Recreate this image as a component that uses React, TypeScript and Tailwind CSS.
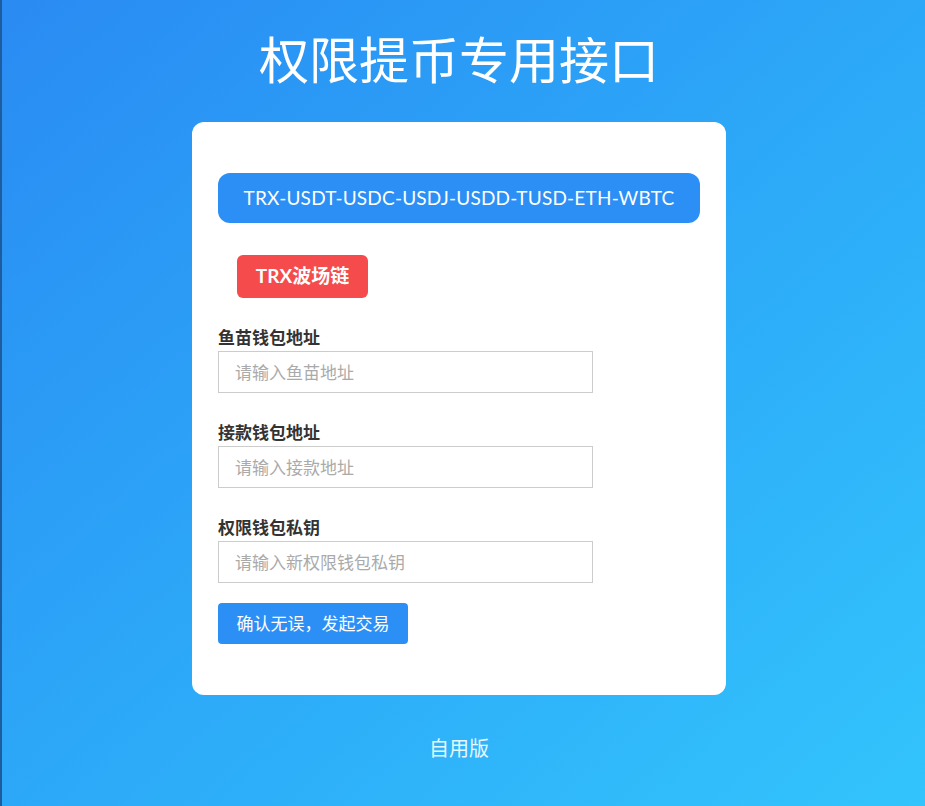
const fields = [
  { label: "鱼苗钱包地址", placeholder: "请输入鱼苗地址" },
  { label: "接款钱包地址", placeholder: "请输入接款地址" },
  { label: "权限钱包私钥", placeholder: "请输入新权限钱包私钥" },
];

const App = () => {
  return (
    <div
      className="min-h-[806px] w-full bg-gradient-to-br from-[#2a8bf3] to-[#33c4fc] border-l-2 border-[#1d5c9e] flex flex-col items-center pr-[9px] pt-[28px]"
      style={{ fontFamily: 'Lato, "Noto Sans CJK SC", sans-serif' }}
    >
      <h1 className="text-[50px] leading-[64px] text-white font-normal">
        权限提币专用接口
      </h1>

      <div className="mt-[30px] w-[534px] bg-white rounded-[12px] px-[26px] pt-[51px] pb-[51px] flex flex-col">
        <div className="h-[50px] rounded-[12px] bg-[#2b8ff5] flex items-center justify-center text-white text-[19px] tracking-[0.2px]">
          TRX-USDT-USDC-USDJ-USDD-TUSD-ETH-WBTC
        </div>

        <div className="mt-[32px] ml-[19px] w-[131px] h-[43px] rounded-[6px] bg-[#f54b4c] flex items-center justify-center text-white text-[19px] font-bold">
          TRX波场链
        </div>

        {fields.map((f) => (
          <div key={f.label} className="mt-[29px] flex flex-col">
            <label className="text-[17px] leading-[22px] font-bold text-[#333] mb-[2px]">
              {f.label}
            </label>
            <input
              className="w-[375px] h-[42px] border border-[#cccccc] px-[16px] text-[17px] text-[#333] placeholder:text-[#aaaaaa] outline-none"
              placeholder={f.placeholder}
            />
          </div>
        ))}

        <button className="mt-[20px] w-[190px] h-[41px] rounded-[4px] bg-[#2b8ff5] text-white text-[17px]">
          确认无误，发起交易
        </button>
      </div>

      <div className="mt-[40px] text-[20px] leading-[26px] text-[#e6f8ff]">自用版</div>
    </div>
  );
};

export default App;
